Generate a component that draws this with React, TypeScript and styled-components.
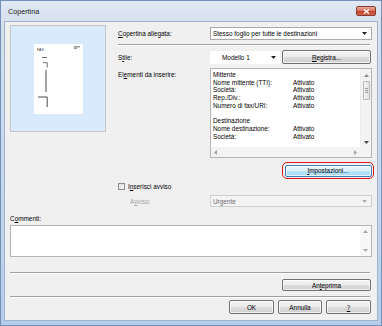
import React from "react";
import styled, { createGlobalStyle } from "styled-components";

const GlobalStyle = createGlobalStyle`
  html, body {
    margin: 0;
    padding: 0;
    background: #ffffff;
  }
  * {
    box-sizing: border-box;
  }
`;

const Window = styled.div`
  width: 382px;
  height: 326px;
  border: 1px solid #7391b8;
  background: linear-gradient(180deg, #dfe8f3 0px, #d6e1ee 21px, #c3d6ec 60%, #b6cde9 100%);
  display: flex;
  flex-direction: column;
  font-family: "Liberation Sans", Arial, sans-serif;
  font-size: 6.4px;
  color: #000;
`;

const TitleBar = styled.div`
  height: 20px;
  display: flex;
  align-items: center;
  justify-content: space-between;
  padding: 0 5px 0 7px;
`;

const Title = styled.span`
  font-size: 7.2px;
  color: #1b1b1b;
`;

const CloseButton = styled.div`
  width: 20px;
  height: 10px;
  border: 1px solid #8a3b30;
  border-radius: 2px;
  background: linear-gradient(180deg, #e9a99a 0%, #d77563 45%, #c2452e 55%, #cf6a4f 100%);
  display: flex;
  align-items: center;
  justify-content: center;
`;

const Body = styled.div`
  flex: 1;
  margin: 0 3px 4px 3px;
  border: 1px solid #9fb3ce;
  background: #f0f0f0;
  padding: 3px 5px 0 5px;
  display: flex;
  flex-direction: column;
`;

const Top = styled.div`
  display: flex;
  align-items: flex-start;
  gap: 12px;
`;

const Preview = styled.div`
  width: 96px;
  height: 107px;
  border: 1px solid #c6c6c6;
  background: #d9eafc;
  display: flex;
  align-items: center;
  justify-content: center;
`;

const Paper = styled.div`
  width: 49px;
  height: 70px;
  background: #ffffff;
  display: flex;
`;

const Form = styled.div`
  width: 254px;
  display: flex;
  flex-direction: column;
`;

const Row = styled.div<{ $h: number; $mt: number; $align?: string; $indent?: number }>`
  display: flex;
  align-items: ${(p) => p.$align || "center"};
  height: ${(p) => p.$h}px;
  margin-top: ${(p) => p.$mt}px;
  padding-left: ${(p) => p.$indent || 0}px;
`;

const Label = styled.span<{ $w?: number; $disabled?: boolean; $pt?: number }>`
  width: ${(p) => (p.$w ? `${p.$w}px` : "auto")};
  flex-shrink: 0;
  color: ${(p) => (p.$disabled ? "#a3a3a3" : "#000")};
  padding-top: ${(p) => p.$pt || 0}px;
  white-space: nowrap;
`;

const Select = styled.div<{ $w: number; $h: number; $disabled?: boolean }>`
  width: ${(p) => p.$w}px;
  height: ${(p) => p.$h}px;
  border: 1px solid ${(p) => (p.$disabled ? "#cfcfcf" : "#a9a9a9")};
  background: ${(p) => (p.$disabled ? "#f4f4f4" : "#ffffff")};
  color: ${(p) => (p.$disabled ? "#6d6d6d" : "#000")};
  display: flex;
  align-items: center;
  justify-content: space-between;
  padding: 0 4px 0 2px;
`;

const Combo = styled.div`
  width: 70px;
  height: 13px;
  background: #ffffff;
  display: flex;
  align-items: center;
  justify-content: space-between;
  padding: 0 4px 0 12px;
`;

const Etched = styled.div<{ $mt: number; $mr?: number }>`
  margin-top: ${(p) => p.$mt}px;
  margin-right: ${(p) => p.$mr || 0}px;
  border-top: 1px solid #a0a0a0;
  border-bottom: 1px solid #ffffff;
`;

const Button = styled.div<{ $w: number; $h?: number; $hot?: boolean }>`
  width: ${(p) => p.$w}px;
  height: ${(p) => p.$h || 12}px;
  border: 1px solid ${(p) => (p.$hot ? "#3c7fb1" : "#707070")};
  border-radius: 2px;
  background: ${(p) =>
    p.$hot
      ? "linear-gradient(180deg, #eaf6fd 0%, #d9f0fc 50%, #bee6fd 50%, #a7d9f5 100%)"
      : "linear-gradient(180deg, #f4f4f4 0%, #ebebeb 50%, #dddddd 50%, #cfcfcf 100%)"};
  box-shadow: inset 0 0 0 1px rgba(255, 255, 255, 0.7);
  display: flex;
  align-items: center;
  justify-content: center;
  flex-shrink: 0;
`;

const Ring = styled.div`
  border: 1.5px solid #e0141b;
  border-radius: 5px;
  padding: 1.5px;
  margin-right: -2px;
`;

const ListBox = styled.div`
  width: 162px;
  height: 90px;
  border: 1px solid #b5b5b5;
  background: #ffffff;
  display: grid;
  grid-template-columns: 1fr 11px;
  grid-template-rows: 1fr 10px;
`;

const ListContent = styled.div`
  padding: 2px 2px 0 2px;
  overflow: hidden;
`;

const ListRow = styled.div`
  height: 7.7px;
  line-height: 7.7px;
  display: grid;
  grid-template-columns: 80px 1fr;
  white-space: nowrap;
`;

const VScroll = styled.div`
  background: #f3f3f3;
  border-left: 1px solid #ececec;
  display: flex;
  flex-direction: column;
  align-items: center;
  justify-content: space-between;
  padding: 5px 0 3px 0;
`;

const Thumb = styled.div`
  width: 7px;
  height: 19px;
  margin-top: -38px;
  border: 1px solid #b8b8b8;
  border-radius: 1px;
  background: linear-gradient(90deg, #f3f3f3, #e2e2e2);
  display: flex;
  flex-direction: column;
  align-items: center;
  justify-content: center;
  gap: 1px;
`;

const Grip = styled.div`
  width: 3px;
  height: 1px;
  background: #9a9a9a;
`;

const HScroll = styled.div`
  background: #f3f3f3;
  display: flex;
  align-items: center;
  justify-content: space-between;
  padding: 0 3px;
`;

const Corner = styled.div`
  background: #f3f3f3;
`;

const Right = styled.div`
  display: flex;
  justify-content: flex-end;
`;

const CheckBox = styled.div`
  width: 7px;
  height: 7px;
  border: 1px solid #8e8f8f;
  background: linear-gradient(135deg, #dcdcdc, #fbfbfb);
  margin-right: 3px;
`;

const TextArea = styled.div`
  margin-top: 3px;
  height: 32px;
  border: 1px solid #b5b5b5;
  background: #ffffff;
  display: flex;
  justify-content: flex-end;
`;

const TextScroll = styled.div`
  width: 11px;
  background: #f7f7f7;
  display: flex;
  flex-direction: column;
  align-items: center;
  justify-content: space-between;
  padding: 4px 0 4px 0;
`;

const Bottom = styled.div<{ $mt: number; $h: number }>`
  margin-top: ${(p) => p.$mt}px;
  height: ${(p) => p.$h}px;
  display: flex;
  justify-content: flex-end;
  gap: 4px;
  padding-right: 1px;
`;

const Tri = ({ dir, color = "#606060" }: { dir: "up" | "down" | "left" | "right"; color?: string }) => {
  const pts = {
    up: "0,3 2.5,0 5,3",
    down: "0,0 5,0 2.5,3",
    left: "3,0 3,5 0,2.5",
    right: "0,0 0,5 3,2.5",
  }[dir];
  const horiz = dir === "left" || dir === "right";
  return (
    <svg width={horiz ? 3 : 5} height={horiz ? 5 : 3} viewBox={horiz ? "0 0 3 5" : "0 0 5 3"}>
      <polygon points={pts} fill={color} />
    </svg>
  );
};

const PaperDrawing = () => (
  <svg width="49" height="70" viewBox="0 0 49 70">
    <text x="3" y="6.5" fontSize="3.6" fontFamily="Liberation Sans, Arial, sans-serif" fill="#333">
      FAX
    </text>
    <g stroke="#4a4a4a" strokeWidth="0.8" fill="none">
      <line x1="40" y1="2.8" x2="46" y2="2.8" />
      <line x1="40" y1="4.2" x2="43" y2="4.2" />
      <line x1="8" y1="13.5" x2="13" y2="13.5" />
      <polyline points="9,18.7 13.2,18.7 13.2,23.5" />
    </g>
    <g stroke="#4a4a4a" strokeWidth="1" fill="none">
      <line x1="12" y1="26" x2="12" y2="48" />
      <polyline points="4,53 13.2,53 13.2,63" />
    </g>
  </svg>
);

const items: [string, string][] = [
  ["Mittente", ""],
  ["Nome mittente (TTI):", "Attivato"],
  ["Società:", "Attivato"],
  ["Rep./Div.:", "Attivato"],
  ["Numero di fax/URI:", "Attivato"],
  ["", ""],
  ["Destinazione", ""],
  ["Nome destinazione:", "Attivato"],
  ["Società:", "Attivato"],
];

export default function App() {
  return (
    <>
      <GlobalStyle />
      <Window>
        <TitleBar>
          <Title>Copertina</Title>
          <CloseButton>
            <svg width="7" height="5" viewBox="0 0 7 5">
              <path d="M1 0.5 L6 4.5 M6 0.5 L1 4.5" stroke="#ffffff" strokeWidth="1.3" />
            </svg>
          </CloseButton>
        </TitleBar>
        <Body>
          <Top>
            <Preview>
              <Paper>
                <PaperDrawing />
              </Paper>
            </Preview>
            <Form>
              <Row $h={13} $mt={2}>
                <Label $w={92}>
                  <u>C</u>opertina allegata:
                </Label>
                <Select $w={162} $h={13}>
                  <span>Stesso foglio per tutte le destinazioni</span>
                  <Tri dir="down" color="#222" />
                </Select>
              </Row>
              <Etched $mt={4} $mr={2} />
              <Row $h={14} $mt={4}>
                <Label $w={92}>
                  S<u>t</u>ile:
                </Label>
                <Combo>
                  <span>Modello 1</span>
                  <Tri dir="down" color="#222" />
                </Combo>
                <div style={{ width: 2 }} />
                <Button $w={89} $h={14}>
                  <span>
                    <u>R</u>egistra...
                  </span>
                </Button>
              </Row>
              <Row $h={90} $mt={4} $align="flex-start">
                <Label $w={92} $pt={3}>
                  El<u>e</u>menti da inserire:
                </Label>
                <ListBox>
                  <ListContent>
                    {items.map(([k, v], i) => (
                      <ListRow key={i}>
                        <span>{k}</span>
                        <span>{v}</span>
                      </ListRow>
                    ))}
                  </ListContent>
                  <VScroll>
                    <Tri dir="up" color="#8a8a8a" />
                    <Thumb>
                      <Grip />
                      <Grip />
                      <Grip />
                    </Thumb>
                    <Tri dir="down" color="#4a4a4a" />
                  </VScroll>
                  <HScroll>
                    <Tri dir="left" color="#a0a0a0" />
                    <Tri dir="right" color="#a0a0a0" />
                  </HScroll>
                  <Corner />
                </ListBox>
              </Row>
              <Right style={{ marginTop: 4 }}>
                <Ring>
                  <Button $w={87} $h={12} $hot>
                    <span>
                      <u>I</u>mpostazioni...
                    </span>
                  </Button>
                </Ring>
              </Right>
              <Row $h={8} $mt={3}>
                <CheckBox />
                <Label>
                  I<u>n</u>serisci avviso
                </Label>
              </Row>
              <Row $h={12} $mt={5} $indent={12}>
                <Label $w={80} $disabled>
                  A<u>v</u>viso:
                </Label>
                <Select $w={162} $h={12} $disabled>
                  <span>Urgente</span>
                  <Tri dir="down" color="#b0b0b0" />
                </Select>
              </Row>
            </Form>
          </Top>
          <Label style={{ marginTop: 8 }}>
            C<u>o</u>mmenti:
          </Label>
          <TextArea>
            <TextScroll>
              <Tri dir="up" color="#a8a8a8" />
              <Tri dir="down" color="#a8a8a8" />
            </TextScroll>
          </TextArea>
          <Etched $mt={15} $mr={2} />
          <Bottom $mt={5} $h={12}>
            <Button $w={89} $h={12}>
              <span>
                An<u>t</u>eprima
              </span>
            </Button>
          </Bottom>
          <Etched $mt={5} $mr={2} />
          <Bottom $mt={2} $h={14}>
            <Button $w={45} $h={14}>
              OK
            </Button>
            <Button $w={44} $h={14}>
              Annulla
            </Button>
            <Button $w={45} $h={14}>
              <u>?</u>
            </Button>
          </Bottom>
        </Body>
      </Window>
    </>
  );
}
